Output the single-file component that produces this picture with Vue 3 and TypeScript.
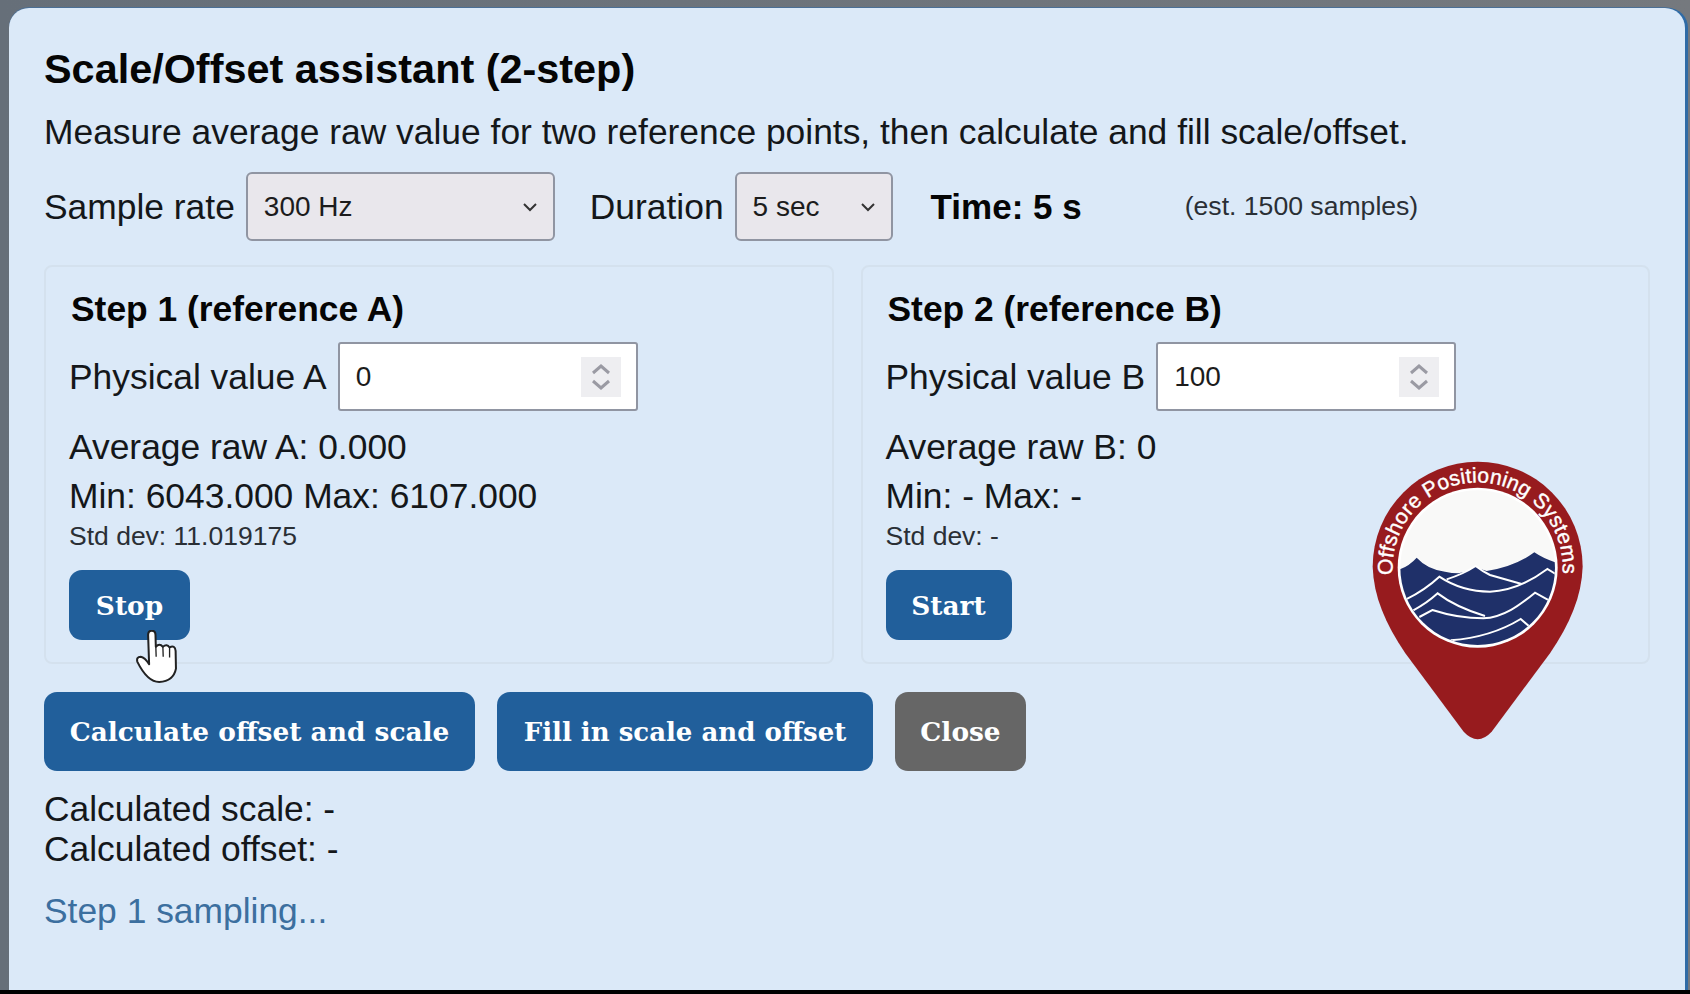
<script setup lang="ts">
const steps = [
  { title: 'Step 1 (reference A)', label: 'Physical value A', value: '0', avg: 'Average raw A: 0.000', range: 'Min: 6043.000 Max: 6107.000', std: 'Std dev: 11.019175', action: 'Stop', cls: 'stop' },
  { title: 'Step 2 (reference B)', label: 'Physical value B', value: '100', avg: 'Average raw B: 0', range: 'Min: - Max: -', std: 'Std dev: -', action: 'Start', cls: 'start' },
]
</script>

<template>
  <div class="screen">
    <div class="panel">
      <h1 class="title">Scale/Offset assistant (2-step)</h1>
      <p class="desc">Measure average raw value for two reference points, then calculate and fill scale/offset.</p>
      <div class="controls">
        <span class="lbl">Sample rate</span>
        <div class="sel sel-rate">
          <span>300 Hz</span>
          <svg class="chev" viewBox="0 0 16 10" width="16" height="10"><path d="M2 2l6 6 6-6" fill="none" stroke="#333" stroke-width="2"/></svg>
        </div>
        <span class="lbl dur">Duration</span>
        <div class="sel sel-dur">
          <span>5 sec</span>
          <svg class="chev" viewBox="0 0 16 10" width="16" height="10"><path d="M2 2l6 6 6-6" fill="none" stroke="#333" stroke-width="2"/></svg>
        </div>
        <strong class="time">Time: 5 s</strong>
        <span class="est">(est. 1500 samples)</span>
      </div>
      <div class="cards">
        <section v-for="s in steps" :key="s.title" class="card">
          <h2 class="card-title">{{ s.title }}</h2>
          <div class="field">
            <span class="lbl">{{ s.label }}</span>
            <div class="num">
              <span>{{ s.value }}</span>
              <div class="spin">
                <svg viewBox="0 0 40 40" width="40" height="40"><path d="M12 16l8-7 8 7M12 24l8 7 8-7" fill="none" stroke="#9a9aa3" stroke-width="3"/></svg>
              </div>
            </div>
          </div>
          <div class="avg">{{ s.avg }}</div>
          <div class="range">{{ s.range }}</div>
          <div class="std">{{ s.std }}</div>
          <button class="btn" :class="s.cls">{{ s.action }}</button>
        </section>
      </div>
      <div class="actions">
        <button class="btn big calc">Calculate offset and scale</button>
        <button class="btn big fill">Fill in scale and offset</button>
        <button class="btn big close">Close</button>
      </div>
      <div class="result">Calculated scale: -<br />Calculated offset: -</div>
      <div class="status">Step 1 sampling...</div>

      <svg class="logo" viewBox="0 0 780 900" width="260" height="300">
        <defs>
          <clipPath id="disc"><circle cx="413" cy="353" r="232" /></clipPath>
          <path id="arc" d="M159 375A255 255 0 1 1 667 375" />
        </defs>
        <path d="M98 350A315 315 0 1 1 728 350C725 440 690 520 630 610L455 845Q413 890 371 845L196 610C136 520 101 440 98 350Z" fill="#971b1e" />
        <circle cx="413" cy="353" r="240" fill="#fff" />
        <circle cx="413" cy="353" r="232" fill="#f9f9f8" />
        <g clip-path="url(#disc)">
          <path d="M175 360Q208 348 230 323Q262 358 315 365Q335 370 355 370Q385 365 407 348Q422 360 440 363Q525 350 583 307Q612 327 650 338L660 600H170Z" fill="#1f3069" />
          <g fill="none" stroke="#fff" stroke-width="6">
            <path d="M198 448Q255 420 298 380C340 408 395 425 450 425C520 423 575 392 622 357L650 374" />
            <path d="M320 388Q370 372 407 348Q430 366 450 375L545 402" />
            <path d="M220 481Q260 460 293 430Q345 470 435 498" />
            <path d="M238 501L277 480C330 497 380 505 430 505C490 503 540 465 585 428L627 451" />
            <path d="M332 571C410 565 480 545 542 507L570 531" />
          </g>
        </g>
        <text class="logo-text" fill="#fff" stroke="#fff" stroke-width="1.2"><textPath href="#arc" textLength="842" lengthAdjust="spacing">Offshore Positioning Systems</textPath></text>
      </svg>

      <svg class="hand" viewBox="286 270 122 158" width="41" height="53">
        <path d="M322 285Q322 272 333 272Q344 272 344 285L345 320Q356 308 366 320Q378 310 386 322Q402 314 404 332L405 385Q398 422 355 425Q320 425 290 365Q286 350 300 350Q312 352 325 372Z" fill="#fff" stroke="#222" stroke-width="6" stroke-linejoin="round" />
        <path d="M345 320L346 350M366 320L367 350M386 322L386 352" fill="none" stroke="#222" stroke-width="4" />
      </svg>
    </div>
  </div>
</template>

<style>
html, body { margin: 0; background: #000; }
</style>

<style scoped>
.screen {
  width: 1690px;
  height: 994px;
  box-sizing: border-box;
  padding: 8px 0 4px 9px;
  overflow: hidden;
  background: linear-gradient(#000, #000) bottom / 100% 4px no-repeat, linear-gradient(90deg, #666f79, #75797e);
  font-family: "Liberation Sans", Arial, sans-serif;
  color: #111;
}
.panel {
  position: relative;
  width: 1676px;
  height: 982px;
  box-sizing: border-box;
  padding: 38px 35px 0;
  background: #dbe9f8;
  border-radius: 20px 20px 0 0;
  box-shadow: 3px 0 0 #2f6ba6, 0 -1px 0 #4b6f95;
}
.title {
  margin: 0;
  font-size: 41.4px;
  line-height: 46px;
  font-weight: 700;
  color: #050505;
}
.desc {
  margin: 20px 0 0;
  font-size: 35.4px;
  line-height: 40px;
  color: #14171a;
}
.controls {
  display: flex;
  align-items: center;
  height: 69px;
  margin-top: 20px;
}
.lbl { font-size: 35.4px; line-height: 40px; color: #14171a; white-space: nowrap; }
.sel {
  position: relative;
  box-sizing: border-box;
  height: 69px;
  padding-left: 16px;
  display: flex;
  align-items: center;
  background: #e9e7ec;
  border: 2px solid #9095a2;
  border-radius: 6px;
  font-size: 28px;
  color: #1c1c1c;
}
.chev { position: absolute; right: 15px; top: 28px; }
.sel-rate { width: 309px; margin-left: 11px; }
.dur { margin-left: 35px; }
.sel-dur { width: 158px; margin-left: 11px; }
.time { margin-left: 38px; font-size: 35px; color: #050505; }
.est { margin-left: 103px; font-size: 26.6px; color: #2a2f35; }
.cards {
  display: flex;
  gap: 27px;
  margin-top: 24px;
}
.card {
  box-sizing: border-box;
  width: 790px;
  height: 399px;
  padding: 22px 23px 0;
  border: 2px solid #d4e1ee;
  border-radius: 8px;
}
.card-title {
  margin: 0;
  font-size: 35.4px;
  line-height: 40px;
  font-weight: 700;
  color: #050505;
  padding-left: 2px;
}
.field {
  display: flex;
  align-items: center;
  margin-top: 13px;
}
.num {
  position: relative;
  box-sizing: border-box;
  width: 300px;
  height: 69px;
  margin-left: 11px;
  padding-left: 16px;
  display: flex;
  align-items: center;
  background: #fff;
  border: 2px solid #9095a2;
  border-radius: 3px;
  font-size: 28px;
  color: #1c1c1c;
}
.spin {
  position: absolute;
  right: 15px;
  top: 13px;
  width: 40px;
  height: 40px;
  background: #eeeef1;
}
.avg, .range { font-size: 35.4px; line-height: 48px; color: #14171a; }
.avg { margin-top: 12px; }
.range { margin-top: 1px; }
.std { font-size: 26.5px; line-height: 30px; margin-top: 1px; color: #2a2f35; }
.btn {
  display: block;
  border: 0;
  border-radius: 13px;
  background: #215f9b;
  color: #fff;
  font-family: "DejaVu Serif", serif;
  font-weight: 700;
  font-size: 26.4px;
  padding: 0;
}
.stop { width: 121px; height: 70px; margin-top: 19px; }
.start { width: 126px; height: 70px; margin-top: 19px; }
.actions {
  display: flex;
  gap: 22px;
  margin-top: 28px;
}
.big { height: 79px; }
.calc { width: 431px; }
.fill { width: 376px; font-size: 26px; }
.close { width: 131px; background: #666; }
.result {
  margin-top: 18px;
  font-size: 35.4px;
  line-height: 40px;
  color: #14171a;
}
.status {
  margin-top: 22px;
  font-size: 35.4px;
  line-height: 40px;
  color: #3c6f9f;
}
.logo { position: absolute; left: 1331px; top: 442px; }
.logo-text { font-family: "Liberation Sans", Arial, sans-serif; font-size: 63px; }
.hand { position: absolute; left: 127px; top: 622px; }
</style>
